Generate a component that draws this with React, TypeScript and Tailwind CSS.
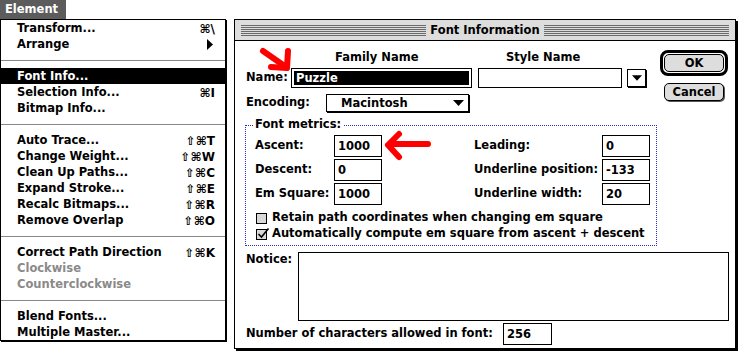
import React from 'react';

type MenuItem = { label?: string; keys?: string; sub?: boolean; sep?: boolean; hi?: boolean; off?: boolean };

const menu: MenuItem[] = [
  { label: 'Transform...', keys: '⌘\\' },
  { label: 'Arrange', sub: true },
  { sep: true },
  { label: 'Font Info...', hi: true },
  { label: 'Selection Info...', keys: '⌘I' },
  { label: 'Bitmap Info...' },
  { sep: true },
  { label: 'Auto Trace...', keys: '⇧⌘T' },
  { label: 'Change Weight...', keys: '⇧⌘W' },
  { label: 'Clean Up Paths...', keys: '⇧⌘C' },
  { label: 'Expand Stroke...', keys: '⇧⌘E' },
  { label: 'Recalc Bitmaps...', keys: '⇧⌘R' },
  { label: 'Remove Overlap', keys: '⇧⌘O' },
  { sep: true },
  { label: 'Correct Path Direction', keys: '⇧⌘K' },
  { label: 'Clockwise', off: true },
  { label: 'Counterclockwise', off: true },
  { sep: true },
  { label: 'Blend Fonts...' },
  { label: 'Multiple Master...' },
];

function Field({ value, w }: { value: string; w: string }) {
  return (
    <div className={`${w} h-[22px] border border-black bg-white pl-[3px] pt-px flex items-center`}>{value}</div>
  );
}

function MetricRow({ l, lv, r, rv }: { l: string; lv: string; r: string; rv: string }) {
  return (
    <div className="flex items-center h-[22px]">
      <span className="w-[79px]">{l}</span>
      <Field value={lv} w="w-[48px]" />
      <span className="ml-[92px] w-[128px]">{r}</span>
      <Field value={rv} w="w-[48px]" />
    </div>
  );
}

function Stripes() {
  return (
    <div className="flex-1 h-[11px] bg-[repeating-linear-gradient(to_bottom,#6a6a6a_0px,#6a6a6a_1px,transparent_1px,transparent_2px)]" />
  );
}

function DownTriangle({ w = 11 }: { w?: number }) {
  return (
    <svg width={w} height={6} viewBox="0 0 11 6">
      <path d="M0 0 H11 L5.5 6 Z" fill="#000" />
    </svg>
  );
}

export default function App() {
  return (
    <div className="relative w-[740px] h-[353px] bg-white overflow-hidden flex items-start font-['DejaVu_Sans',sans-serif] font-bold text-[11.5px] text-black leading-none">
      {/* Element menu */}
      <div className="w-[227px] flex flex-col">
        <div className="w-[66px] h-[19px] bg-[#5c5c5c] text-white pl-[5px] pt-px flex items-center">Element</div>
        <div className="w-[226px] border border-black bg-white shadow-[1px_1px_0_#000]">
          {menu.map((m, i) =>
            m.sep ? (
              <div key={i} className="h-[16px] pt-[8px]">
                <div className="h-px bg-[#888]" />
              </div>
            ) : (
              <div
                key={i}
                className={`h-[16px] flex items-center pl-[16px] pr-[10px] pt-[2px] ${m.hi ? 'bg-black text-white' : ''} ${m.off ? 'text-[#8a8a8a]' : ''}`}
              >
                <span className="flex-1">{m.label}</span>
                {m.keys && <span className="text-[12px]">{m.keys}</span>}
                {m.sub && (
                  <svg width="7" height="11" viewBox="0 0 7 11" className="mr-[1px] -mt-[2px]">
                    <path d="M0 0 L6 5.5 L0 11 Z" fill="#000" />
                  </svg>
                )}
              </div>
            )
          )}
        </div>
      </div>

      {/* Font Information dialog */}
      <div className="ml-[7px] mt-[19px] w-[502px] h-[330px] border border-black bg-white shadow-[2px_2px_0_#000] flex flex-col">
        <div className="h-[21px] border-b border-black bg-[#dddddd] flex items-center pl-[6px] pr-[6px]">
          <Stripes />
          <span className="px-[4px] pt-px">Font Information</span>
          <Stripes />
        </div>

        <div className="pl-[11px] flex flex-col">
          <div className="flex">
            <div className="w-[414px] flex flex-col">
              <div className="mt-[10px] h-[14px] flex items-center">
                <span className="ml-[89px] w-[171px]">Family Name</span>
                <span>Style Name</span>
              </div>
              <div className="mt-[3px] h-[20px] flex items-center">
                <span className="w-[45px]">Name:</span>
                <div className="w-[181px] h-[20px] border border-black p-[2px]">
                  <div className="h-full bg-black text-white pl-[2px] pt-px flex items-center">Puzzle</div>
                </div>
                <div className="ml-[6px] w-[144px] h-[20px] border border-black" />
                <div className="ml-[5px] w-[19px] h-[18px] border border-black shadow-[1px_1px_0_#000] flex items-center justify-center">
                  <DownTriangle w={10} />
                </div>
              </div>
              <div className="mt-[6px] h-[18px] flex items-center">
                <span className="w-[80px]">Encoding:</span>
                <div className="w-[143px] h-[18px] border border-black shadow-[1px_1px_0_#000] flex items-center pl-[14px] pr-[4px]">
                  <span className="flex-1 pt-px">Macintosh</span>
                  <DownTriangle />
                </div>
              </div>
            </div>
            <div className="flex flex-col">
              <div className="mt-[9px] w-[68px] h-[26px] rounded-[8px] border-[3px] border-black p-px">
                <div className="h-full rounded-[5px] border border-black bg-[#dddddd] flex items-center justify-center pt-px">OK</div>
              </div>
              <div className="mt-[7px] ml-[4px] w-[60px] h-[18px] rounded-[5px] border border-black bg-[#dddddd] shadow-[1px_1px_0_#555] flex items-center justify-center pt-px">
                Cancel
              </div>
            </div>
          </div>

          {/* Font metrics group */}
          <div className="relative mt-[13px] -ml-px w-[412px] h-[121px] border border-dotted border-[#2a2ad0] pl-[9px] pt-[9px]">
            <span className="absolute top-[-7px] left-[7px] bg-white px-[2px]">Font metrics:</span>
            <div className="flex flex-col gap-[2px]">
              <MetricRow l="Ascent:" lv="1000" r="Leading:" rv="0" />
              <MetricRow l="Descent:" lv="0" r="Underline position:" rv="-133" />
              <MetricRow l="Em Square:" lv="1000" r="Underline width:" rv="20" />
            </div>
            <div className="mt-[5px] flex flex-col">
              <div className="h-[16px] flex items-center pl-[1px]">
                <div className="w-[11px] h-[11px] border border-black bg-[#d8d8d8]" />
                <span className="ml-[5px]">Retain path coordinates when changing em square</span>
              </div>
              <div className="h-[16px] flex items-center pl-[1px]">
                <div className="w-[11px] h-[11px] border border-black bg-[#d8d8d8] relative">
                  <svg width="13" height="13" viewBox="0 0 13 13" className="absolute -top-[3px] left-[0px]">
                    <path d="M1.5 7 L4.5 10 L11.5 1.5" stroke="#000" strokeWidth="1.6" fill="none" />
                  </svg>
                </div>
                <span className="ml-[5px]">Automatically compute em square from ascent + descent</span>
              </div>
            </div>
          </div>

          <div className="mt-[6px] flex items-start">
            <span className="w-[52px] pt-[2px]">Notice:</span>
            <div className="w-[431px] h-[69px] border border-black" />
          </div>

          <div className="mt-[2px] flex items-center">
            <span className="w-[257px]">Number of characters allowed in font:</span>
            <Field value="256" w="w-[49px]" />
          </div>
        </div>
      </div>

      {/* red annotation arrows */}
      <svg className="absolute left-0 top-0 pointer-events-none" width="740" height="353">
        <g stroke="#ff0000" strokeWidth="6" strokeLinecap="round" strokeLinejoin="round" fill="none">
          <path d="M263 51 L286 67" />
          <path d="M287 68 L288 51 M287 68 L271 67" />
          <path d="M428 144 L392 144" />
          <path d="M388 145 L399 134 M388 145 L399 157" />
        </g>
      </svg>
    </div>
  );
}
